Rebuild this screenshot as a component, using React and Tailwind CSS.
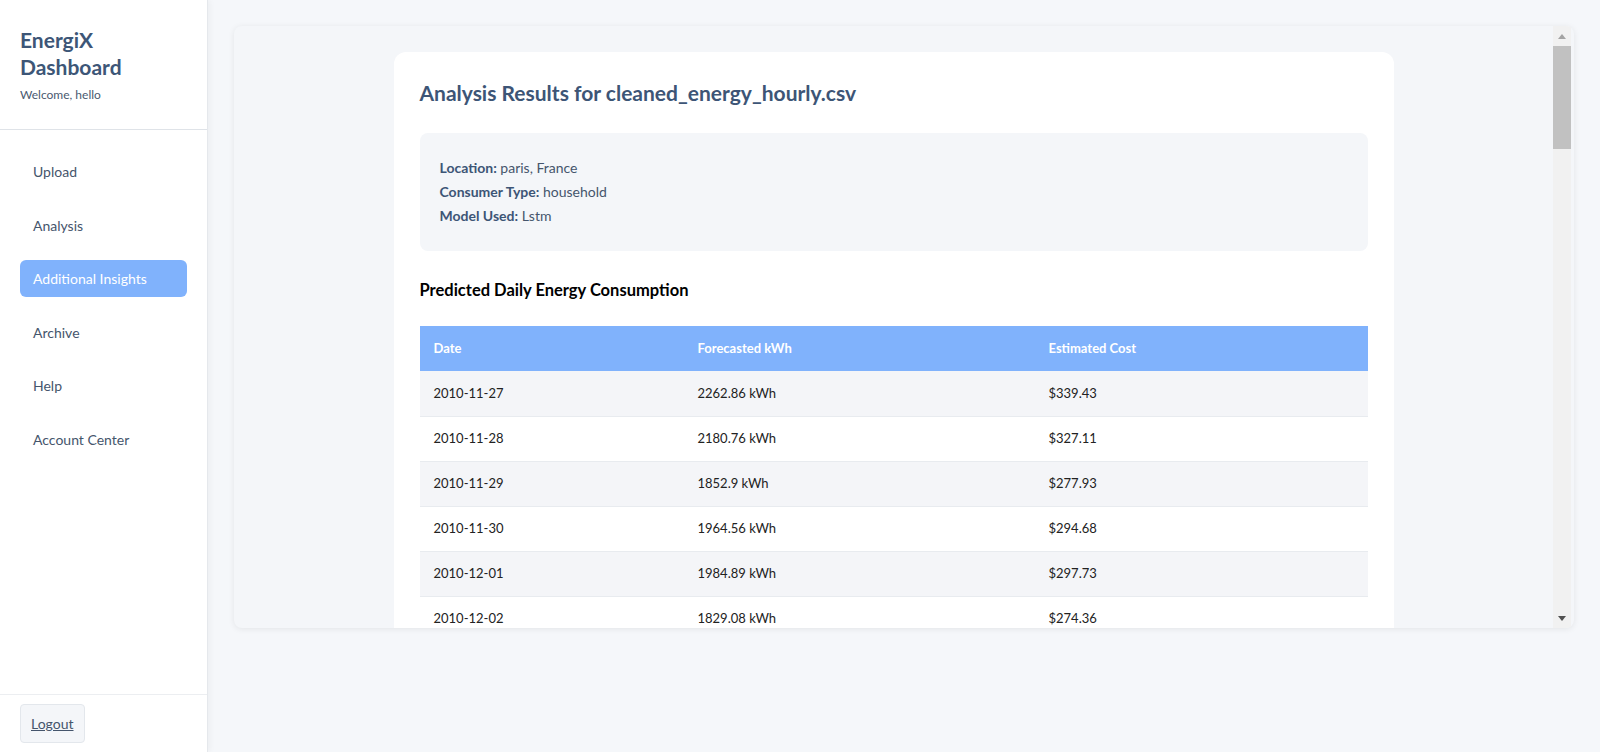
import React from "react";

const rows = [
  { date: "2010-11-27", kwh: "2262.86 kWh", cost: "$339.43" },
  { date: "2010-11-28", kwh: "2180.76 kWh", cost: "$327.11" },
  { date: "2010-11-29", kwh: "1852.9 kWh", cost: "$277.93" },
  { date: "2010-11-30", kwh: "1964.56 kWh", cost: "$294.68" },
  { date: "2010-12-01", kwh: "1984.89 kWh", cost: "$297.73" },
  { date: "2010-12-02", kwh: "1829.08 kWh", cost: "$274.36" },
];

const navItems = ["Upload", "Analysis", "Additional Insights", "Archive", "Help", "Account Center"];

const App = () => {
  const active = "Additional Insights";
  return (
    <div className="flex h-[752px] w-full overflow-hidden bg-[#f5f7fa]" style={{ fontFamily: 'Lato, "Noto Sans", sans-serif' }}>
      <aside className="flex w-[208px] shrink-0 flex-col bg-white border-r border-[#e5e8ec] shadow-[2px_0_6px_rgba(0,0,0,0.04)]">
        <div className="px-5 pt-[26px] pb-[25px] border-b border-[#dfe3e8]">
          <h1 className="text-[21px] leading-[27px] font-bold text-[#3d5677]">EnergiX<br />Dashboard</h1>
          <p className="mt-[6px] text-[12px] text-[#4a5a70]">Welcome, hello</p>
        </div>
        <nav className="flex flex-col gap-[16.5px] px-5 pt-[23px]">
          {navItems.map((item) => (
            <div
              key={item}
              className={
                item === active
                  ? "h-[37px] flex items-center rounded-md bg-[#80b2fc] px-[13px] text-[14px] text-white"
                  : "h-[37px] flex items-center rounded-md px-[13px] text-[14px] text-[#45556c]"
              }
            >
              {item}
            </div>
          ))}
        </nav>
        <div className="mt-auto border-t border-[#eceef1] px-5 pt-[9px] pb-[9px]">
          <button className="h-[39px] rounded border border-[#e3e7ec] bg-[#f4f6f9] px-[10px] text-[14px] text-[#45556c] underline">Logout</button>
        </div>
      </aside>

      <main className="flex-1 p-[26px]">
        <div className="flex h-[602px] rounded-lg bg-[#f4f6f9] shadow-[0_1px_6px_rgba(0,0,0,0.08)] overflow-hidden">
          <div className="flex-1 overflow-hidden p-[26px]">
            <div className="mx-auto max-w-[1000px] rounded-xl bg-white p-[26px] pt-[25px]">
              <h2 className="text-[21px] leading-[32px] font-bold text-[#3d5576]">Analysis Results for cleaned_energy_hourly.csv</h2>
              <div className="mt-[24px] rounded-lg bg-[#f4f6f9] px-5 py-[23px] text-[14px] leading-[24px] text-[#45556c]">
                <p><span className="font-bold text-[#3d5576]">Location:</span> paris, France</p>
                <p><span className="font-bold text-[#3d5576]">Consumer Type:</span> household</p>
                <p><span className="font-bold text-[#3d5576]">Model Used:</span> Lstm</p>
              </div>
              <h3 className="mt-[27px] text-[16.5px] leading-[24px] font-bold text-black">Predicted Daily Energy Consumption</h3>
              <table className="mt-[24px] w-full border-collapse text-left text-[13px] text-[#222]">
                <thead>
                  <tr className="h-[45px] bg-[#80b2fc] text-white">
                    <th className="w-[264px] px-[14px] font-bold">Date</th>
                    <th className="w-[351px] px-[14px] font-bold">Forecasted kWh</th>
                    <th className="px-[14px] font-bold">Estimated Cost</th>
                  </tr>
                </thead>
                <tbody>
                  {rows.map((r, i) => (
                    <tr key={r.date} className={i % 2 === 0 ? "h-[45px] bg-[#f4f5f8] border-b border-[#e8ebef]" : "h-[45px] bg-white border-b border-[#e8ebef]"}>
                      <td className="px-[14px]">{r.date}</td>
                      <td className="px-[14px]">{r.kwh}</td>
                      <td className="px-[14px]">{r.cost}</td>
                    </tr>
                  ))}
                </tbody>
              </table>
            </div>
          </div>
          <div className="flex w-[18px] shrink-0 flex-col items-center bg-[#f1f1f1] mr-[3px]">
            <div className="flex h-[20px] w-full items-center justify-center">
              <svg width="8" height="5" viewBox="0 0 8 5"><path d="M0 5 L4 0 L8 5 Z" fill="#a3a3a3" /></svg>
            </div>
            <div className="h-[103px] w-full bg-[#c1c1c1]" />
            <div className="flex-1" />
            <div className="flex h-[20px] w-full items-center justify-center">
              <svg width="8" height="5" viewBox="0 0 8 5"><path d="M0 0 L8 0 L4 5 Z" fill="#505050" /></svg>
            </div>
          </div>
        </div>
      </main>
    </div>
  );
};

export default App;
